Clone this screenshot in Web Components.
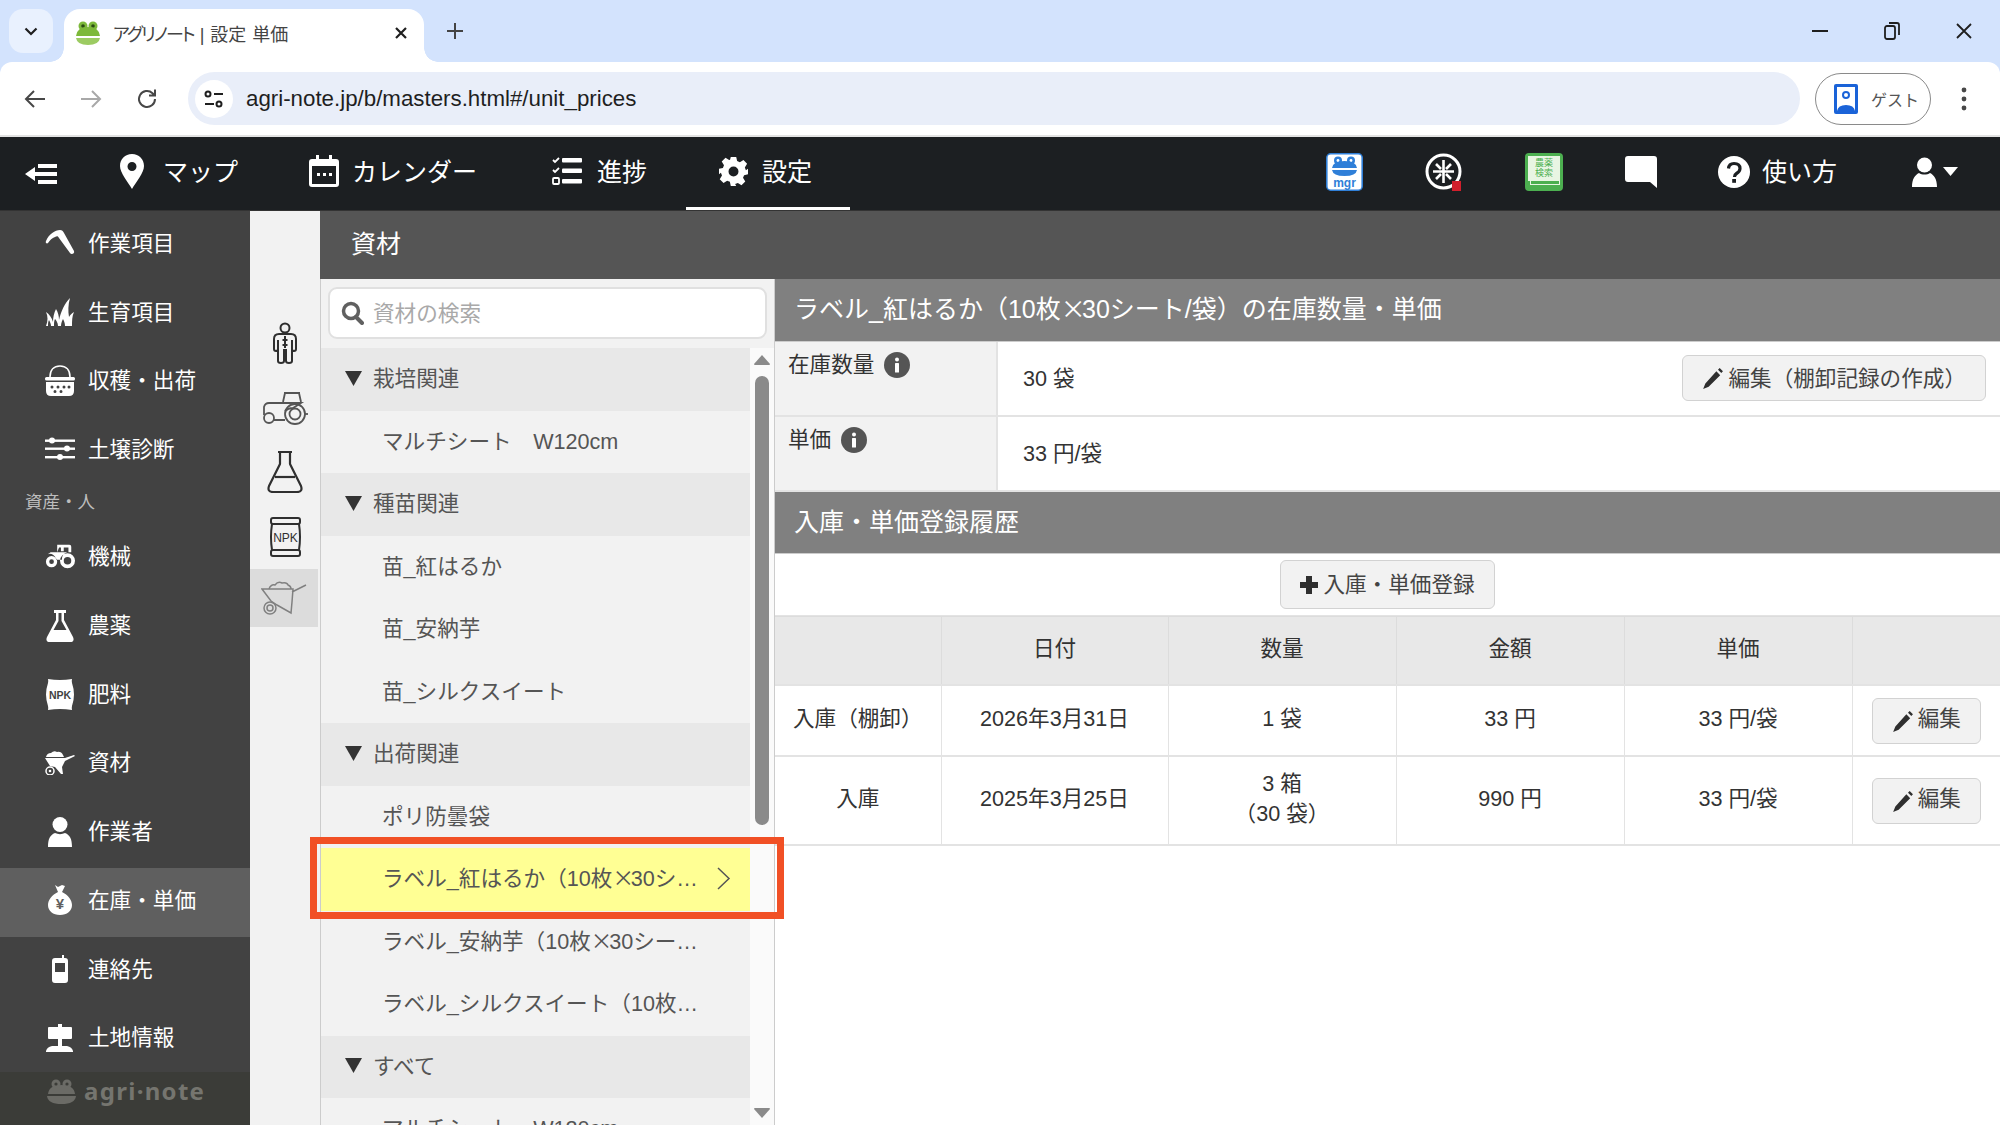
<!DOCTYPE html>
<html lang="ja">
<head>
<meta charset="utf-8">
<title>アグリノート | 設定 単価</title>
<style>
  html, body { margin: 0; height: 1125px; overflow: hidden; background: #fff; }
  body {
    width: 2000px;
    font-family: "Liberation Sans", "Noto Sans CJK JP", sans-serif;
    font-size: 21.6px;
    display: flex;
    flex-direction: column;
  }
  .x { font-family: "Noto Sans CJK JP", sans-serif; letter-spacing: -.15em; }
</style>
</head>
<body>
<x-browser-chrome tab-title="アグリノート | 設定 単価" url="agri-note.jp/b/masters.html#/unit_prices"></x-browser-chrome>

<x-app-header>
  <x-top-link slot="left" icon="pin">マップ</x-top-link>
  <x-top-link slot="left" icon="calendar" style="padding-right:43px">カレンダー</x-top-link>
  <x-top-link slot="left" icon="checklist">進捗</x-top-link>
  <x-top-link slot="left" icon="gear" active style="padding-right:38px">設定</x-top-link>
</x-app-header>

<x-app-main>
  <x-side-nav slot="nav">
    <x-nav-item icon="sickle">作業項目</x-nav-item>
    <x-nav-item icon="grass">生育項目</x-nav-item>
    <x-nav-item icon="basket">収穫・出荷</x-nav-item>
    <x-nav-item icon="sliders">土壌診断</x-nav-item>
    <x-nav-label>資産・人</x-nav-label>
    <x-nav-item icon="tractor">機械</x-nav-item>
    <x-nav-item icon="flask">農薬</x-nav-item>
    <x-nav-item icon="npk">肥料</x-nav-item>
    <x-nav-item icon="barrow">資材</x-nav-item>
    <x-nav-item icon="person">作業者</x-nav-item>
    <x-nav-item icon="moneybag" active>在庫・単価</x-nav-item>
    <x-nav-item icon="phone">連絡先</x-nav-item>
    <x-nav-item icon="sign">土地情報</x-nav-item>
  </x-side-nav>

  <x-icon-rail slot="rail"></x-icon-rail>

  <x-panel-title slot="title">資材</x-panel-title>

  <x-material-list slot="list">
    <x-list-row group>栽培関連</x-list-row>
    <x-list-row>マルチシート　W120cm</x-list-row>
    <x-list-row group>種苗関連</x-list-row>
    <x-list-row>苗_紅はるか</x-list-row>
    <x-list-row>苗_安納芋</x-list-row>
    <x-list-row>苗_シルクスイート</x-list-row>
    <x-list-row group>出荷関連</x-list-row>
    <x-list-row>ポリ防曇袋</x-list-row>
    <x-list-row selected>ラベル_紅はるか（10枚<span class="x">×</span>30シート/袋）</x-list-row>
    <x-list-row>ラベル_安納芋（10枚<span class="x">×</span>30シート/袋）</x-list-row>
    <x-list-row>ラベル_シルクスイート（10枚<span class="x">×</span>30シート/袋）</x-list-row>
    <x-list-row group>すべて</x-list-row>
    <x-list-row>マルチシート　W120cm</x-list-row>
  </x-material-list>

  <x-detail-panel slot="detail">
    <x-section-head>ラベル_紅はるか（10枚<span class="x">×</span>30シート/袋）の在庫数量・単価</x-section-head>
    <x-info-row label="在庫数量">30 袋<x-btn slot="action" icon="pencil">編集（棚卸記録の作成）</x-btn></x-info-row>
    <x-info-row label="単価">33 円/袋</x-info-row>
    <x-section-head>入庫・単価登録履歴</x-section-head>
    <x-add-bar><x-btn icon="plus">入庫・単価登録</x-btn></x-add-bar>
    <x-price-table></x-price-table>
  </x-detail-panel>
</x-app-main>

<script>
const ICONS = {
  // top bar
  pin: '<svg width="24" height="35" viewBox="0 0 24 35" style="margin-right:6px"><path fill="#fff" fill-rule="evenodd" d="M12 0C5 0 0 5 0 12c0 7 8 16 12 23 4-7 12-16 12-23C24 5 19 0 12 0zm0 8a4.500 4.500 0 1 1 0 9 4.500 4.500 0 0 1 0-9z"/></svg>',
  calendar: '<svg width="30" height="32" viewBox="0 0 30 32"><path fill="#fff" fill-rule="evenodd" d="M7 0h3v4h10V0h3v4h4q3 0 3 3v22q0 3-3 3H3q-3 0-3-3V7q0-3 3-3h4zM3 11v18h24V11z"/><g fill="#fff"><rect x="8" y="18" width="3" height="3"/><rect x="14" y="18" width="3" height="3"/><rect x="20" y="18" width="3" height="3"/></g></svg>',
  checklist: '<svg width="30" height="28" viewBox="0 0 30 28" style="margin-right:2px"><g fill="#fff"><rect x="10" y="1" width="20" height="4.500" rx="1"/><rect x="10" y="11.500" width="20" height="4.500" rx="1"/><rect x="10" y="22" width="20" height="4.500" rx="1"/></g><g fill="none" stroke="#fff" stroke-width="1.800"><path d="M1 3l2 2 4-4M1 13l2 2 4-4"/><rect x="1" y="21" width="6" height="6" rx="1"/></g></svg>',
  gear: '<svg width="29" height="29" viewBox="0 0 32 32" style="margin-left:1px;margin-right:1px"><path fill="#fff" fill-rule="evenodd" d="M13 0h6l1 4.500 3 1.300 4-2.500 4 4.200-2.500 4 1.200 3L32 13v6l-4.300 1-1.200 3 2.500 4-4.200 4.200-4-2.500-3 1.200L19 32h-6l-1-4.600-3-1.200-4 2.500L.8 24.500l2.500-4-1.200-3L0 19v-6l4.300-1 1.200-3-2.500-4L7.200.8l4 2.500 1-.3zM16 10.500a5.500 5.500 0 1 0 0 11 5.500 5.500 0 0 0 0-11z"/></svg>',
  // side nav
  sickle: '<svg width="30" height="30" viewBox="0 0 30 30"><path fill="#fff" d="M1 13C4 6 10 2 15 2c2 0 3 1 4 3l10 18c1 3-3 4-4 2L14 10c-1-2-2-2-4-1-3 1-5 3-7 6-1 1-3 0-2-2z"/></svg>',
  grass: '<svg width="30" height="30" viewBox="0 0 30 30"><path fill="#fff" d="M1 29c2-5 2-10 0-14 3 2 6 6 7 10 0-5 1-9 3-13 2 3 3 7 3 11 2-9 6-17 11-22-2 7-2 13-1 19 1-2 3-4 5-5-2 4-2 9-2 14h-7c0-3-1-5-2-7-1 2-2 4-2 7h-3c0-3-2-6-3-7-1 2-1 4-1 7H6c0-2-1-4-2-6-1 2-1 4-1 6z"/></svg>',
  basket: '<svg width="30" height="31" viewBox="0 0 30 31"><path fill="none" stroke="#fff" stroke-width="1.600" d="M5 12C5 5 9 1 15 1s10 4 10 11"/><rect x="0" y="12" width="30" height="3.500" rx="1.500" fill="#fff"/><path fill="#fff" fill-rule="evenodd" d="M1 17h28v9q0 5-5 5H6q-5 0-5-5zM7 20.500a1.500 1.500 0 1 0 0 3 1.500 1.500 0 0 0 0-3zm6 0a1.500 1.500 0 1 0 0 3 1.500 1.500 0 0 0 0-3zm6 0a1.500 1.500 0 1 0 0 3 1.500 1.500 0 0 0 0-3zm5 0a1.500 1.500 0 1 0 0 3 1.500 1.500 0 0 0 0-3zM10 25a1.500 1.500 0 1 0 0 3 1.500 1.500 0 0 0 0-3zm6 0a1.500 1.500 0 1 0 0 3 1.500 1.500 0 0 0 0-3z"/></svg>',
  sliders: '<svg width="30" height="24" viewBox="0 0 30 24"><g fill="#fff"><rect y="2.500" width="30" height="2.400"/><rect y="10.500" width="30" height="2.400"/><rect y="19" width="30" height="2.400"/><circle cx="7" cy="3.500" r="3"/><circle cx="22" cy="11.500" r="3"/><circle cx="15" cy="20" r="3"/></g></svg>',
  tractor: '<svg width="32" height="25" viewBox="0 0 32 25"><path fill="#fff" fill-rule="evenodd" d="M13 0h13q2 0 2 2v6h-3V3h-5v4h-3V3h-2l-2 5zM6 8h18a8 8 0 0 0-6 8h-6a7 7 0 0 0-9-6zM7 12a6 6 0 1 0 0 12 6 6 0 0 0 0-12zm0 3.500a2.500 2.500 0 1 1 0 5 2.500 2.500 0 0 1 0-5zM24 9a8 8 0 1 0 0 16 8 8 0 0 0 0-16zm0 4a4 4 0 1 1 0 8 4 4 0 0 1 0-8z"/></svg>',
  flask: '<svg width="28" height="32" viewBox="0 0 28 32"><path fill="#fff" fill-rule="evenodd" d="M8 0h12v3h-2v7l9 17q2 5-3 5H4q-5 0-3-5l9-17V3H8zm4.500 3v8L7.500 20h13l-5-9V3z"/></svg>',
  npk: '<svg width="28" height="31" viewBox="0 0 28 31"><path fill="#fff" d="M2 0q12 2 24 0 -.5 2 0 4 2 6 2 11.500T26 27q-.5 2 0 4-12-2-24 0 .5-2 0-4-2-6-2-11.500T2 4q.5-2 0-4z"/><text x="14" y="20" text-anchor="middle" font-family="Liberation Sans, sans-serif" font-weight="700" font-size="10.500" fill="#424242">NPK</text></svg>',
  barrow: '<svg width="30" height="24" viewBox="0 0 30 24"><path fill="#fff" d="M1 6q1-4 5-4 3-3 6-1 4-1 6 3l1 2zM0 7h20l9-3 1 1-10 5-3 6 1 7-2 0-6-7-5-1z"/><circle cx="5" cy="20" r="4" fill="none" stroke="#fff" stroke-width="1.500"/><circle cx="5" cy="20" r="1.300" fill="#fff"/></svg>',
  person: '<svg width="24" height="30" viewBox="0 0 24 30"><circle cx="12" cy="7.500" r="7.500" fill="#fff"/><path fill="#fff" d="M0 30c0-8 2-12 7-14 3 1.500 7 1.500 10 0 5 2 7 6 7 14z"/></svg>',
  moneybag: '<svg width="24" height="30" viewBox="0 0 24 30"><path fill="#fff" d="M7 0l3 2 4-2 3 1-3 6c6 3 10 8 10 13 0 6-5 10-12 10S0 26 0 20c0-5 4-10 10-13z"/><text x="12" y="24" text-anchor="middle" font-family="Liberation Sans, sans-serif" font-weight="700" font-size="15" fill="#5f5f5f">¥</text></svg>',
  phone: '<svg width="16" height="28" viewBox="0 0 16 28"><path fill="#fff" fill-rule="evenodd" d="M10 0h2v3h1q3 0 3 3v19q0 3-3 3H3q-3 0-3-3V6q0-3 3-3h7zM3 8v9h10V8z"/></svg>',
  sign: '<svg width="28" height="28" viewBox="0 0 28 28"><path fill="#fff" d="M12 0h4v3h9q1 0 1 1v10q0 1-1 1h-9v7h5q5 1 6 5v1H0v-1q1-4 6-5h6v-7H3q-1 0-1-1V4q0-1 1-1h9z"/></svg>',
  // rail, outlined
  suit: '<svg width="26" height="42" viewBox="0 0 26 42"><g fill="none" stroke="#2f2f2f" stroke-width="2"><circle cx="13" cy="6" r="4.500"/><path d="M7 12h12q5 0 5 5v10q0 2-2 2t-2-2V18M6 18v9q0 2-2 2t-2-2V17q0-5 5-5M6 18v21q0 2 3 2t3-2v-11h2v11q0 2 3 2t3-2V18"/><path d="M13 14v12M10.500 18h5M10.500 23h5"/></g></svg>',
  tractorLine: '<svg width="46" height="34" viewBox="0 0 46 34"><g fill="none" stroke="#555" stroke-width="1.800"><path d="M21 11l2-9h14l2 9M22 2h16"/><path d="M12 29h11M23 20q3-3 8-3l8-5H7q-4 0-5 4v8"/><circle cx="7" cy="27" r="5"/><circle cx="33" cy="23" r="10"/><circle cx="33" cy="23" r="5.500"/><path d="M43 23h3"/></g></svg>',
  flaskLine: '<svg width="36" height="42" viewBox="0 0 36 42"><g fill="none" stroke="#2f2f2f" stroke-width="2.200" stroke-linejoin="round"><path d="M11 1h14M13 1v12L2 35q-2 6 4 6h24q6 0 4-6L23 13V1"/><path d="M8 26h20"/></g></svg>',
  npkLine: '<svg width="33" height="40" viewBox="0 0 33 40"><g fill="none" stroke="#2f2f2f" stroke-width="2"><path d="M4 1h25q2 0 2 2v2q0 2-2 2H4Q2 7 2 5V3q0-2 2-2zM4 33h25q2 0 2 2v2q0 2-2 2H4q-2 0-2-2v-2q0-2 2-2zM3 7Q1 20 3 33M30 7q2 13 0 26"/></g><text x="16.500" y="25" text-anchor="middle" font-family="Liberation Sans, sans-serif" font-size="12" fill="#2f2f2f">NPK</text></svg>',
  barrowLine: '<svg width="46" height="34" viewBox="0 0 46 34"><g fill="none" stroke="#808080" stroke-width="1.500"><path d="M1 8h31l-1 13-1 11-14-8-6-4zM31 11l14-7"/><path d="M8 8q2-5 6-4 3-4 7-2 5-1 6 2 3 1 3 4"/><circle cx="9" cy="27" r="6"/><circle cx="9" cy="27" r="3"/></g></svg>',
  // buttons
  pencil: '<svg width="21" height="22" viewBox="0 0 19 20"><path fill="#2f2f2f" d="M13 3l3.500 3.500L6 17 1 19l2-5zM14.500 1.500L16 0l3 3-1.500 1.500z"/></svg>',
  plus: '<svg width="18" height="18" viewBox="0 0 18 18"><path fill="#2f2f2f" d="M6 0h6v6h6v6h-6v6H6v-6H0V6h6z"/></svg>',
};

class XBrowserChrome extends HTMLElement {
  constructor() {
    super();
    this.attachShadow({ mode: 'open' });
  }
  connectedCallback() {
    const [brand, page] = this.getAttribute('tab-title').split(' | ');
    const url = this.getAttribute('url');
    this.shadowRoot.innerHTML = `
      <style>
        :host { display: block; height: 137px; background: #d3e3fd; flex: none; }
        .strip { height: 62px; display: flex; align-items: flex-end; padding-left: 9px; position: relative; }
        .drop { width: 44px; height: 44px; margin-bottom: 9px; background: #e9f1fe; border-radius: 14px;
          display: flex; align-items: center; justify-content: center; }
        .tab { width: 360px; height: 53px; margin-left: 11px; background: #fff; border-radius: 16px 16px 0 0;
          display: flex; align-items: center; position: relative; box-sizing: border-box; padding: 0 0 6px 11px;
          font-size: 18px; color: #444; }
        .tab::before, .tab::after { content: ""; position: absolute; bottom: 0; width: 14px; height: 14px; }
        .tab::before { left: -14px; background: radial-gradient(circle at 0 0, transparent 13.500px, #fff 14px); }
        .tab::after { right: -14px; background: radial-gradient(circle at 100% 0, transparent 13.500px, #fff 14px); }
        .tab .t { margin-left: 12px; flex: 1; white-space: nowrap; font-feature-settings: "palt"; word-spacing: 1px; }
        .tab .k { letter-spacing: -2px; }
        .tab .x { margin-right: 16px; display: flex; }
        .plus { margin: 0 0 9px 22px; height: 44px; display: flex; align-items: center; }
        .win { margin-left: auto; align-self: flex-start; display: flex; }
        .win div { width: 72px; height: 62px; display: flex; align-items: center; justify-content: center; }
        .bar { height: 73px; background: #fff; border-radius: 12px 12px 0 0; display: flex; align-items: center; box-sizing: border-box; }
        .nav { display: flex; width: 56px; justify-content: center; }
        .omni { width: 1612px; height: 53px; margin-left: 13px; background: #e9eef9; border-radius: 27px; display: flex; align-items: center; box-sizing: border-box; padding-left: 7px; font-size: 22.300px; color: #1f1f1f; }
        .site { width: 38px; height: 38px; border-radius: 50%; background: #fff; display: flex; align-items: center; justify-content: center; margin-right: 13px; }
        .guest { width: 116px; height: 52px; margin-left: 15px; border: 1.500px solid #8a8a8a; border-radius: 27px; box-sizing: border-box; display: flex; align-items: center; padding-left: 18px; gap: 13px; font-size: 16px; color: #555; }
        .kebab { margin-left: 30px; display: flex; }
        .line { height: 2px; background: #e3e3e3; }
      </style>
      <div class="strip">
        <div class="drop"><svg width="14" height="9" viewBox="0 0 14 9"><path d="M1.500 1.500L7 7l5.500-5.500" fill="none" stroke="#1f1f1f" stroke-width="2.200"/></svg></div>
        <div class="tab">
          <svg width="26" height="24" viewBox="0 0 26 24">
            <circle cx="8" cy="5" r="4.500" fill="#7db93a"/><circle cx="18" cy="5" r="4.500" fill="#7db93a"/>
            <circle cx="8" cy="5" r="1.800" fill="#2b4c12"/><circle cx="18" cy="5" r="1.800" fill="#2b4c12"/>
            <path d="M1 15Q2 6 13 6t12 9z" fill="#7db93a"/><path d="M1 17h24q-1 7-12 7T1 17z" fill="#9ccb62"/>
          </svg>
          <span class="t"><span class="k">${brand}</span> | ${page}</span>
          <span class="x"><svg width="14" height="14" viewBox="0 0 14 14"><path d="M2 2l10 10M12 2L2 12" stroke="#1f1f1f" stroke-width="2.200"/></svg></span>
        </div>
        <div class="plus"><svg width="18" height="18" viewBox="0 0 18 18"><path d="M9 1v16M1 9h16" stroke="#444" stroke-width="2"/></svg></div>
        <div class="win">
          <div><svg width="16" height="2" viewBox="0 0 16 2"><rect width="16" height="2" fill="#1f1f1f"/></svg></div>
          <div><svg width="16" height="18" viewBox="0 0 16 18"><rect x="1" y="4" width="10" height="13" rx="2" fill="none" stroke="#1f1f1f" stroke-width="1.800"/><path d="M5 1h8q2 0 2 2v10" fill="none" stroke="#1f1f1f" stroke-width="1.800"/></svg></div>
          <div><svg width="16" height="16" viewBox="0 0 16 16"><path d="M1 1l14 14M15 1L1 15" stroke="#1f1f1f" stroke-width="1.800"/></svg></div>
        </div>
      </div>
      <div class="bar">
        <div class="nav" style="margin-left:7px"><svg width="22" height="20" viewBox="0 0 22 20"><path d="M21 10H3M10 2l-8 8 8 8" fill="none" stroke="#474747" stroke-width="2"/></svg></div>
        <div class="nav"><svg width="22" height="20" viewBox="0 0 22 20"><path d="M1 10h18M12 2l8 8-8 8" fill="none" stroke="#a8a8a8" stroke-width="2"/></svg></div>
        <div class="nav"><svg width="22" height="22" viewBox="0 0 22 22"><path d="M19 11a8 8 0 1 1-2.500-5.800L19 7.500M19 1.500v6h-6" fill="none" stroke="#474747" stroke-width="2"/></svg></div>
        <div class="omni">
          <div class="site"><svg width="20" height="20" viewBox="0 0 20 20"><g fill="none" stroke="#1f1f1f" stroke-width="2"><circle cx="4" cy="5" r="2.500"/><path d="M10 5h9M1 15h9"/><circle cx="15" cy="15" r="2.500"/></g></svg></div>
          ${url}
        </div>
        <div class="guest">
          <svg width="24" height="30" viewBox="0 0 24 30"><rect width="24" height="30" rx="2" fill="#1a63d8"/><rect x="3" y="3" width="18" height="24" fill="#fff"/><circle cx="12" cy="11" r="3" fill="none" stroke="#1a63d8" stroke-width="2"/><path d="M3 27q1-6 9-6t9 6z" fill="#1a63d8"/></svg>
          ゲスト
        </div>
        <div class="kebab"><svg width="6" height="24" viewBox="0 0 6 24"><circle cx="3" cy="3" r="2.400" fill="#474747"/><circle cx="3" cy="12" r="2.400" fill="#474747"/><circle cx="3" cy="21" r="2.400" fill="#474747"/></svg></div>
      </div>
      <div class="line"></div>
    `;
  }
}

class XAppHeader extends HTMLElement {
  constructor() {
    super();
    this.attachShadow({ mode: 'open' }).innerHTML = `
      <style>
        :host { display: flex; height: 74px; flex: none; background: #1c1f22; color: #fff; border-bottom: 1px solid #333; box-sizing: border-box; font-size: 25px; }
        .back { width: 88px; display: flex; align-items: center; padding-left: 25px; box-sizing: border-box; }
        .right { margin-left: auto; display: flex; align-items: center; gap: 62px; padding-right: 42px; margin-top: -4px; }
        .help { display: flex; align-items: center; gap: 12px; margin-left: -1px; }
        .help span { margin-top: -3px; }
        .user { display: flex; align-items: center; gap: 6px; margin-left: 13px; }
      </style>
      <div class="back"><svg width="32" height="24" viewBox="0 0 32 24"><path fill="#fff" d="M13 2h19v4H13zM0 12l10-7v5h22v4H10v5zM13 18h19v4H13z"/></svg></div>
      <slot name="left"></slot>
      <div class="right">
        <svg width="37" height="38" viewBox="0 0 37 38">
          <rect x=".8" y=".8" width="35.400" height="36.400" rx="4" fill="#fff" stroke="#2f7fd8" stroke-width="1.600"/>
          <circle cx="12" cy="7.500" r="4" fill="#2f7fd8"/><circle cx="25" cy="7.500" r="4" fill="#2f7fd8"/>
          <circle cx="12" cy="7.500" r="1.400" fill="#fff"/><circle cx="25" cy="7.500" r="1.400" fill="#fff"/>
          <path d="M6 15Q7 8 18.500 8T31 15z" fill="#2f7fd8"/><path d="M6 17h25q-1 6-12.500 6T6 17z" fill="#2f7fd8"/>
          <text x="18.500" y="34" text-anchor="middle" font-family="Liberation Sans, sans-serif" font-weight="700" font-size="12" fill="#2f7fd8">mgr</text>
        </svg>
        <svg width="38" height="38" viewBox="0 0 38 38">
          <circle cx="18.500" cy="18.500" r="16.500" fill="#1c1f22" stroke="#fff" stroke-width="3"/>
          <g stroke="#fff" stroke-width="2.600" fill="none"><path d="M18.500 7v23M8 18.500h21M11 11l5 5M26 11l-5 5M11 26l5-5M26 26l-5-5"/></g>
          <rect x="27" y="28" width="9" height="10" fill="#d11f2c"/>
        </svg>
        <svg width="38" height="38" viewBox="0 0 38 38">
          <rect width="38" height="38" rx="4" fill="#4caf50"/>
          <rect x="3" y="3" width="32" height="25" fill="#e8f5e3"/>
          <rect x="5" y="27" width="30" height="5" fill="#e8f5e3"/><rect x="6" y="28" width="28" height="3" fill="#4caf50"/>
          <text x="19" y="13" text-anchor="middle" font-family="Noto Sans CJK JP, sans-serif" font-size="9" fill="#4caf50">農薬</text>
          <text x="19" y="23" text-anchor="middle" font-family="Noto Sans CJK JP, sans-serif" font-size="9" fill="#4caf50">検索</text>
        </svg>
        <svg width="32" height="32" viewBox="0 0 32 32"><path fill="#fff" d="M3 0h26q3 0 3 3v29l-7-6H3q-3 0-3-3V3q0-3 3-3z"/></svg>
        <div class="help">
          <svg width="32" height="32" viewBox="0 0 32 32"><circle cx="16" cy="16" r="16" fill="#fff"/><path d="M10.500 12.500Q11 7.500 16 7.500q6 0 6 5 0 3-3.500 5-2 1.200-2 3.500" fill="none" stroke="#1c1f22" stroke-width="3.200"/><rect x="14.200" y="23" width="3.800" height="3.800" fill="#1c1f22"/></svg>
          <span>使い方</span>
        </div>
        <div class="user">
          <svg width="25" height="30" viewBox="0 0 25 30"><circle cx="12.500" cy="8" r="7.500" fill="#fff"/><path fill="#fff" d="M0 30c0-8 3-12 7-14 3 2 8 2 11 0 4 2 7 6 7 14z"/></svg>
          <svg width="15" height="9" viewBox="0 0 15 9"><path fill="#fff" d="M0 0h15l-7.500 9z"/></svg>
        </div>
      </div>
    `;
  }
}

class XTopLink extends HTMLElement {
  constructor() { super(); this.attachShadow({ mode: 'open' }); }
  connectedCallback() {
    this.shadowRoot.innerHTML = `
      <style>
        :host { display: inline-flex; align-items: center; gap: 13px; padding: 0 39px 0 32px; height: 73px; box-sizing: border-box; position: relative; color: #fff; }
        :host([active]) { box-shadow: inset 0 -3px 0 #fff; }
        span { display: block; margin-top: -7px; }
        svg { display: block; margin-top: -5px; }
      </style>
      ${ICONS[this.getAttribute('icon')]}<span><slot></slot></span>
    `;
  }
}

class XAppMain extends HTMLElement {
  constructor() {
    super();
    this.attachShadow({ mode: 'open' }).innerHTML = `
      <style>
        :host { display: grid; flex: 1; min-height: 0; grid-template-columns: 250px 70px 454px 1fr; grid-template-rows: 68px 1fr; overflow: hidden; }
        ::slotted([slot=nav]) { grid-row: 1 / 3; }
        ::slotted([slot=rail]) { grid-row: 1 / 3; }
        ::slotted([slot=title]) { grid-column: 3 / 5; }
      </style>
      <slot name="nav"></slot><slot name="rail"></slot><slot name="title"></slot><slot name="list"></slot><slot name="detail"></slot>
    `;
  }
}

class XSideNav extends HTMLElement {
  constructor() {
    super();
    this.attachShadow({ mode: 'open' }).innerHTML = `
      <style>
        :host { display: flex; flex-direction: column; background: #424242; color: #fff; overflow: hidden; }
        .foot { flex: none; height: 53px; margin-top: -2px; background: #3b3c38; display: flex; align-items: flex-start; gap: 8px; padding: 3px 0 0 47px; box-sizing: border-box;
          font-family: "Noto Sans", sans-serif; font-weight: 700; font-size: 24px; letter-spacing: 1.300px; color: #75756f; line-height: 32px; position: relative; }
      </style>
      <slot></slot>
      <div class="foot">
        <svg width="29" height="25" viewBox="0 0 29 25" style="margin-top:4px">
          <g fill="#6b6b66"><circle cx="9" cy="5" r="4.500"/><circle cx="20" cy="5" r="4.500"/><path d="M1 15Q2 6 14.500 6T28 15z"/><path d="M0 17h29q-1 8-14.500 8T0 17z"/></g>
          <circle cx="9" cy="5" r="1.600" fill="#3b3c38"/><circle cx="20" cy="5" r="1.600" fill="#3b3c38"/>
        </svg>
        <span>agri·note</span>
      </div>
    `;
  }
}

class XNavItem extends HTMLElement {
  constructor() { super(); this.attachShadow({ mode: 'open' }); }
  connectedCallback() {
    this.shadowRoot.innerHTML = `
      <style>
        :host { display: flex; align-items: center; flex: none; height: 68.700px; box-sizing: border-box; padding: 0 0 4px 45px; font-size: 21.600px; }
        :host([active]) { background: #5f5f5f; }
        .ic { width: 30px; display: flex; justify-content: center; margin-right: 13px; }
        .lb { margin-bottom: 4px; }
      </style>
      <div class="ic">${ICONS[this.getAttribute('icon')]}</div><span class="lb"><slot></slot></span>
    `;
  }
}

class XNavLabel extends HTMLElement {
  constructor() {
    super();
    this.attachShadow({ mode: 'open' }).innerHTML = `
      <style>:host { display: block; flex: none; height: 38.800px; box-sizing: border-box; padding: 2px 0 0 25px; font-size: 17.500px; line-height: 28px; color: #bdbdbd; }</style>
      <slot></slot>
    `;
  }
}

class XIconRail extends HTMLElement {
  constructor() {
    super();
    const rows = ['suit', 'tractorLine', 'flaskLine', 'npkLine'].map(n => `<div class="r">${ICONS[n]}</div>`).join('');
    this.attachShadow({ mode: 'open' }).innerHTML = `
      <style>
        :host { display: block; background: #f2f2f2; padding-top: 100px; box-sizing: border-box; }
        .r { height: 64.500px; display: flex; align-items: center; justify-content: center; }
        .r.on { height: 58px; background: #dcdcdc; margin-right: 2px; }
      </style>
      ${rows}<div class="r on">${ICONS.barrowLine}</div>
    `;
  }
}

class XPanelTitle extends HTMLElement {
  constructor() {
    super();
    this.attachShadow({ mode: 'open' }).innerHTML = `
      <style>:host { display: flex; align-items: center; background: #555; color: #fff; font-size: 25px; padding: 0 0 7px 31px; box-sizing: border-box; }</style>
      <slot></slot>
    `;
  }
}

class XMaterialList extends HTMLElement {
  constructor() {
    super();
    this.attachShadow({ mode: 'open' }).innerHTML = `
      <style>
        :host { display: block; background: #f2f2f2; border-left: 1px solid #ccc; box-sizing: border-box; min-height: 0; position: relative; z-index: 1; }
        .search { height: 69px; box-sizing: border-box; padding: 8px 7px 9px; }
        .box { height: 52px; box-sizing: border-box; background: #fff; border: 2px solid #e0e0e0; border-radius: 9px; display: flex; align-items: center; padding: 0 0 4px 11px; gap: 9px; color: #a9a9a9; font-size: 21.600px; }
        .box svg { margin-top: 4px; }
        .body { display: grid; grid-template-columns: 429px 24px; }
        .scroll { background: #fafafa; display: flex; flex-direction: column; align-items: center; height: 780px; box-sizing: border-box; padding-top: 7px; }
        .thumb { width: 14px; height: 449px; margin-top: 11px; background: #8a8a8a; border-radius: 7px; }
        .down { margin-top: 283px; }
      </style>
      <div class="search"><div class="box">
        <svg width="23" height="24" viewBox="0 0 23 24"><circle cx="10" cy="10" r="7.500" fill="none" stroke="#606060" stroke-width="3.500"/><path d="M15 16l6 6" stroke="#606060" stroke-width="4" stroke-linecap="round"/></svg>
        資材の検索
      </div></div>
      <div class="body">
        <div><slot></slot></div>
        <div class="scroll">
          <svg width="16" height="10" viewBox="0 0 16 10"><path fill="#8a8a8a" d="M8 0l8 9q0 1-1 1H1q-1 0-1-1z"/></svg>
          <div class="thumb"></div>
          <svg class="down" width="16" height="10" viewBox="0 0 16 10"><path fill="#8a8a8a" d="M8 10L0 1q0-1 1-1h14q1 0 1 1z"/></svg>
        </div>
      </div>
    `;
  }
}

class XListRow extends HTMLElement {
  constructor() { super(); this.attachShadow({ mode: 'open' }); }
  connectedCallback() {
    const group = this.hasAttribute('group');
    const selected = this.hasAttribute('selected');
    this.shadowRoot.innerHTML = `
      <style>
        :host { display: flex; align-items: center; height: 62.500px; box-sizing: border-box; padding: 0 48px 0 61px; color: #555; font-size: 21.600px; position: relative; white-space: nowrap; }
        :host([group]) { background: #e8e8e8; padding-left: 24px; color: #555; }
        :host([selected]) { background: #ffff94; z-index: 2; }
        :host([selected])::after { content: ""; position: absolute; top: -11px; right: -34px; bottom: -8px; left: -11px; border: 7px solid #f15025; pointer-events: none; }
        .txt { display: block; min-width: 0; overflow: hidden; text-overflow: ellipsis; margin-bottom: 5px; }
        .tri { width: 17px; height: 15px; margin-right: 11px; flex: none; margin-bottom: 2px; }
        .chev { position: absolute; right: 19px; top: 19px; }
      </style>
      ${group ? '<svg class="tri" viewBox="0 0 17 15"><path fill="#333" d="M0 0h17L8.500 15z"/></svg>' : ''}
      <span class="txt"><slot></slot></span>
      ${selected ? '<svg class="chev" width="14" height="23" viewBox="0 0 14 23"><path d="M1 1l11 10.500L1 22" fill="none" stroke="#555" stroke-width="1.500"/></svg>' : ''}
    `;
  }
}

class XDetailPanel extends HTMLElement {
  constructor() {
    super();
    this.attachShadow({ mode: 'open' }).innerHTML = `
      <style>:host { display: block; background: #fff; border-left: 1px solid #ccc; box-sizing: border-box; min-height: 0; }</style>
      <slot></slot>
    `;
  }
}

class XSectionHead extends HTMLElement {
  constructor() {
    super();
    this.attachShadow({ mode: 'open' }).innerHTML = `
      <style>:host { display: flex; align-items: center; height: 62.500px; box-sizing: border-box; padding: 0 0 5px 19px; background: #808080; color: #fff; font-size: 25px; border-bottom: 1px solid #ccc; white-space: nowrap; }</style>
      <span><slot></slot></span>
    `;
  }
}

class XInfoRow extends HTMLElement {
  constructor() { super(); this.attachShadow({ mode: 'open' }); }
  connectedCallback() {
    this.shadowRoot.innerHTML = `
      <style>
        :host { display: grid; grid-template-columns: 223px 1fr; height: 75px; box-sizing: border-box; border-bottom: 2px solid #e3e3e3; color: #333; font-size: 21.600px; }
        .lab { background: #f2f2f2; border-right: 2px solid #e3e3e3; padding: 8px 0 0 13px; box-sizing: border-box; display: flex; align-items: flex-start; gap: 10px; line-height: 30px; }
        .val { display: flex; align-items: center; justify-content: space-between; padding: 0 14px 0 25px; }
        .val > span { margin-bottom: 4px; }
        svg { margin-top: 2px; flex: none; }
      </style>
      <div class="lab">${this.getAttribute('label')}
        <svg width="26" height="26" viewBox="0 0 26 26"><circle cx="13" cy="13" r="13" fill="#555"/><circle cx="13" cy="7.500" r="2" fill="#fff"/><rect x="11" y="11" width="4" height="9.500" rx=".6" fill="#fff"/></svg>
      </div>
      <div class="val"><span><slot></slot></span><slot name="action"></slot></div>
    `;
  }
}

class XBtn extends HTMLElement {
  constructor() { super(); this.attachShadow({ mode: 'open' }); }
  connectedCallback() {
    this.shadowRoot.innerHTML = `
      <style>
        :host { display: inline-flex; align-items: center; justify-content: center; gap: 5px; height: 46px; box-sizing: border-box; padding: 0 19px; background: #f2f2f2; border: 1.500px solid #d2d2d2; border-radius: 6px; color: #444; font-size: 21.600px; white-space: nowrap; }
        span { margin-top: -4px; }
        svg { margin-top: 2px; }
      </style>
      ${ICONS[this.getAttribute('icon')]}<span><slot></slot></span>
    `;
  }
}

class XAddBar extends HTMLElement {
  constructor() {
    super();
    this.attachShadow({ mode: 'open' }).innerHTML = `
      <style>
        :host { display: flex; justify-content: center; align-items: center; height: 61.500px; border-bottom: 1px solid #e3e3e3; box-sizing: border-box; }
        ::slotted(x-btn) { height: 49px; }
      </style>
      <slot></slot>
    `;
  }
}

class XPriceTable extends HTMLElement {
  constructor() {
    super();
    const rows = [
      ['入庫（棚卸）', '2026年3月31日', '1 袋', '33 円', '33 円/袋'],
      ['入庫', '2025年3月25日', '3 箱<br>（30 袋）', '990 円', '33 円/袋'],
    ];
    this.attachShadow({ mode: 'open' }).innerHTML = `
      <style>
        :host { display: block; color: #333; font-size: 21.600px; }
        table { border-collapse: collapse; table-layout: fixed; width: 1225px; }
        th, td { box-sizing: border-box; border: 1px solid #e3e3e3; text-align: center; padding: 0 0 3px; font-weight: 400; line-height: 30px; }
        th { background: #e8e8e8; height: 69px; border-color: #dcdcdc; }
        tr.a td { height: 71px; }
        tr.b td { height: 89px; }
        tr { border-bottom: 2px solid #e3e3e3; }
        td:first-child, th:first-child { border-left: 0; }
        td:last-child, th:last-child { border-right: 0; }
        td.act { padding: 0; }
      </style>
      <table>
        <colgroup><col style="width:166px"><col style="width:227px"><col style="width:228px"><col style="width:228px"><col style="width:228px"><col style="width:148px"></colgroup>
        <tr><th></th><th>日付</th><th>数量</th><th>金額</th><th>単価</th><th></th></tr>
        ${rows.map((r, i) => `
          <tr class="${i ? 'b' : 'a'}">
            ${r.map(c => `<td>${c}</td>`).join('')}
            <td class="act"><x-btn icon="pencil">編集</x-btn></td>
          </tr>`).join('')}
      </table>
    `;
  }
}

customElements.define('x-browser-chrome', XBrowserChrome);
customElements.define('x-app-header', XAppHeader);
customElements.define('x-top-link', XTopLink);
customElements.define('x-app-main', XAppMain);
customElements.define('x-side-nav', XSideNav);
customElements.define('x-nav-item', XNavItem);
customElements.define('x-nav-label', XNavLabel);
customElements.define('x-icon-rail', XIconRail);
customElements.define('x-panel-title', XPanelTitle);
customElements.define('x-material-list', XMaterialList);
customElements.define('x-list-row', XListRow);
customElements.define('x-detail-panel', XDetailPanel);
customElements.define('x-section-head', XSectionHead);
customElements.define('x-info-row', XInfoRow);
customElements.define('x-btn', XBtn);
customElements.define('x-add-bar', XAddBar);
customElements.define('x-price-table', XPriceTable);
</script>
</body>
</html>
